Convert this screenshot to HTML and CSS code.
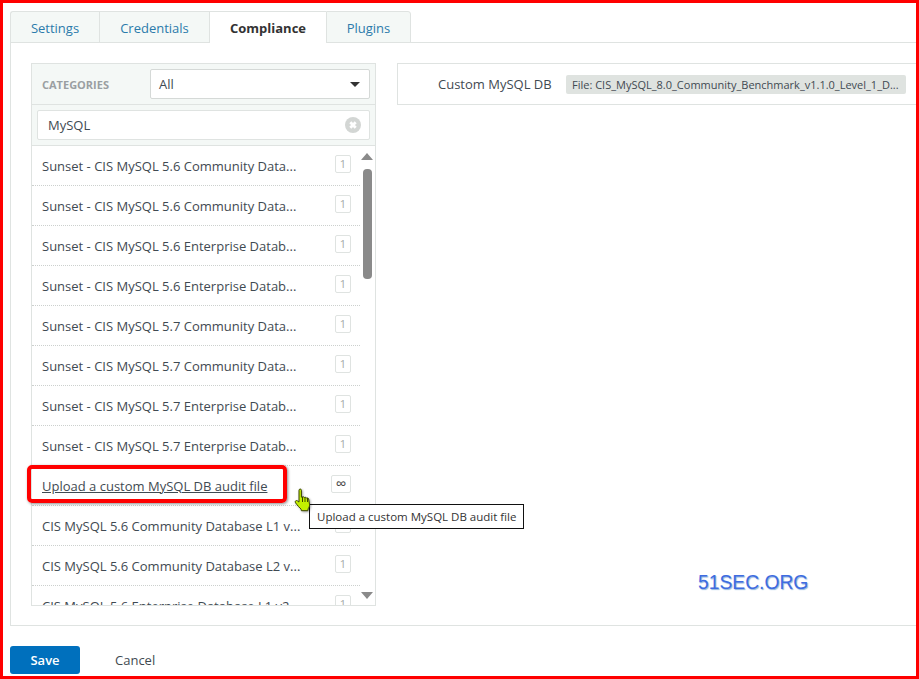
FILE: index.html
```html
<!DOCTYPE html>
<html lang="en">
<head>
<meta charset="utf-8">
<title>Compliance</title>
<link rel="stylesheet" href="styles.css">
</head>
<body>
<div class="frame">
  <div class="tabs">
    <div class="tab tab-settings">Settings</div>
    <div class="tab tab-cred">Credentials</div>
    <div class="tab tab-active">Compliance</div>
    <div class="tab tab-plugins">Plugins</div>
  </div>
  <div class="content">
    <div class="panel">
      <div class="cat-head">
        <span class="cat-label">CATEGORIES</span>
        <div class="select"><span>All</span><span class="caret"></span></div>
      </div>
      <div class="search-row">
        <div class="search"><span>MySQL</span>
          <svg class="clear" width="16" height="16" viewBox="0 0 16 16"><circle cx="8" cy="8" r="8" fill="#d3d6d4"/><path d="M5.300 5.300l5.400 5.400M10.700 5.300l-5.400 5.400" stroke="#fff" stroke-width="2.800"/></svg>
        </div>
      </div>
      <div class="list">
        <div class="row"><span class="name">Sunset - CIS MySQL 5.6 Community Data...</span><span class="badge">1</span></div>
        <div class="row"><span class="name">Sunset - CIS MySQL 5.6 Community Data...</span><span class="badge">1</span></div>
        <div class="row"><span class="name">Sunset - CIS MySQL 5.6 Enterprise Datab...</span><span class="badge">1</span></div>
        <div class="row"><span class="name">Sunset - CIS MySQL 5.6 Enterprise Datab...</span><span class="badge">1</span></div>
        <div class="row"><span class="name">Sunset - CIS MySQL 5.7 Community Data...</span><span class="badge">1</span></div>
        <div class="row"><span class="name">Sunset - CIS MySQL 5.7 Community Data...</span><span class="badge">1</span></div>
        <div class="row"><span class="name">Sunset - CIS MySQL 5.7 Enterprise Datab...</span><span class="badge">1</span></div>
        <div class="row"><span class="name">Sunset - CIS MySQL 5.7 Enterprise Datab...</span><span class="badge">1</span></div>
        <div class="row"><span class="name name-link">Upload a custom MySQL DB audit file</span><span class="badge badge-inf">∞</span></div>
        <div class="row"><span class="name">CIS MySQL 5.6 Community Database L1 v...</span><span class="badge">1</span></div>
        <div class="row"><span class="name">CIS MySQL 5.6 Community Database L2 v...</span><span class="badge">1</span></div>
        <div class="row"><span class="name">CIS MySQL 5.6 Enterprise Database L1 v2...</span><span class="badge">1</span></div>
        <div class="scrollbar">
          <span class="arrow-up"></span>
          <span class="thumb"></span>
          <span class="arrow-down"></span>
        </div>
      </div>
    </div>
    <div class="detail">
      <span class="detail-label">Custom MySQL DB</span>
      <span class="chip">File: CIS_MySQL_8.0_Community_Benchmark_v1.1.0_Level_1_D...</span>
    </div>
  </div>
  <div class="actions">
    <div class="save">Save</div>
    <div class="cancel">Cancel</div>
  </div>
  <div class="highlight"></div>
  <div class="tooltip">Upload a custom MySQL DB audit file</div>
  <svg class="cursor" width="18" height="24" viewBox="0 0 18 24">
    <path d="M5 2.200c0-1.600 2.400-1.600 2.400 0v7l1-.3c.9-.3 1.800 0 2 .6.9-.4 1.900-.1 2.100.6.9-.4 2 0 2.200.9l.8 5.500c.2 1.700-.5 3-1.300 4.200l-.4 2H7.400l-.3-1.500C5.500 19.700 3.600 17.600 1.500 14.800c-1-1.500.6-3 2-1.900l1.500 1.200z" fill="#c3f000" stroke="#3a4400" stroke-width="1"/>
    <path d="M8.500 9v5M11 9.500v4.500M13.500 10v4" stroke="#3a4400" stroke-width="1"/>
  </svg>
  <div class="watermark">51SEC.ORG</div>
</div>
</body>
</html>
```
FILE: styles.css
```css
* { box-sizing: border-box; }
html, body { margin: 0; padding: 0; background: #fff; }
body { font-family: "Open Sans", "Liberation Sans", sans-serif; font-size: 13px; color: #3f4a52; }
.frame { position: relative; width: 919px; height: 679px; border: 3px solid #f00; padding: 8px 0 0 7px; overflow: hidden; }

.tabs { display: flex; height: 32px; }
.tab { height: 32px; padding-top: 7px; text-align: center; color: #2b7bab; background: #f4f8f6; border: 1px solid #dfe3e1; border-right: 0; line-height: 18px; }
.tab-settings { width: 89px; border-radius: 3px 0 0 0; }
.tab-cred { width: 110px; }
.tab-active { width: 117px; background: #fff; border-bottom: 0; color: #333; font-weight: 700; position: relative; z-index: 1; }
.tab-plugins { width: 85px; border-right: 1px solid #dfe3e1; border-radius: 0 3px 0 0; }

.content { display: flex; height: 584px; margin-top: -1px; border: 1px solid #dfe3e1; border-right: 0; padding: 20px 0 0 20px; gap: 21px; align-items: flex-start; }

.panel { width: 345px; height: 543px; border: 1px solid #dfe3e1; flex: none; display: flex; flex-direction: column; }
.cat-head { height: 41px; flex: none; background: #f4f8f6; border-bottom: 1px solid #dfe3e1; display: flex; align-items: center; padding: 0 5px 0 10px; }
.cat-label { width: 108px; font-size: 11px; font-weight: 700; color: #9a9fa2; }
.select { width: 220px; height: 30px; background: #fff; border: 1px solid #d5d9d7; border-radius: 2px; display: flex; align-items: center; justify-content: space-between; padding: 0 9px 0 8px; }
.caret { width: 0; height: 0; border-left: 5px solid transparent; border-right: 5px solid transparent; border-top: 5px solid #333; }
.search-row { height: 41px; flex: none; background: #f4f8f6; border-bottom: 1px solid #dfe3e1; padding: 5px; }
.search { height: 30px; background: #fff; border: 1px solid #dfe3e1; border-radius: 2px; display: flex; align-items: center; justify-content: space-between; padding: 0 8px 0 10px; }

.list { position: relative; flex: 1; overflow: hidden; }
.row { height: 40px; width: 328px; display: flex; align-items: center; justify-content: space-between; padding: 0 9px 0 10px; border-bottom: 1px dotted #ccd0ce; }
.name { white-space: nowrap; }
.name-link { text-decoration: underline; }
.badge { width: 16px; height: 18px; margin-top: -4px; border: 1px solid #dfe3e1; border-radius: 2px; text-align: center; font-size: 11px; line-height: 15px; color: #a5aaa8; }
.badge-inf { width: 20px; margin-right: 0; color: #444; font-size: 15px; line-height: 15px; }

.scrollbar { position: absolute; top: 7px; right: 2px; width: 12px; height: 446px; display: flex; flex-direction: column; align-items: center; }
.arrow-up { width: 0; height: 0; border-left: 6px solid transparent; border-right: 6px solid transparent; border-bottom: 7px solid #8a8a8a; }
.thumb { width: 9px; height: 110px; margin-top: 9px; border-radius: 4px; background: #8a8a8a; }
.arrow-down { width: 0; height: 0; margin-top: auto; border-left: 6px solid transparent; border-right: 6px solid transparent; border-top: 7px solid #8a8a8a; }

.detail { flex: 1; height: 42px; border: 1px solid #dfe3e1; border-right: 0; display: flex; align-items: center; padding-left: 40px; }
.detail-label { width: 128px; }
.chip { width: 340px; height: 19px; background: #dfe3e0; border-radius: 2px; padding-left: 6px; font-size: 11px; line-height: 19px; white-space: nowrap; overflow: hidden; }

.actions { display: flex; align-items: center; margin-top: 20px; }
.save { width: 70px; height: 28px; background: #0070bd; border-radius: 3px; color: #fff; text-align: center; line-height: 28px; font-weight: 600; }
.cancel { margin-left: 35px; }

.highlight { position: absolute; left: 24px; top: 462px; width: 260px; height: 38px; border: 4px solid #f00; border-radius: 5px; box-shadow: 1px 1px 3px rgba(0,0,0,.45); }
.tooltip { position: absolute; left: 306px; top: 501px; width: 215px; height: 25px; background: #fff; border: 1px solid #111; font-size: 11.500px; line-height: 23px; padding-left: 7px; color: #333; white-space: nowrap; }
.cursor { position: absolute; left: 291px; top: 485px; filter: drop-shadow(1px 1px 1px rgba(0,0,0,.35)); }
.watermark { position: absolute; left: 695px; top: 568px; font-family: "Liberation Sans", Arial, sans-serif; font-size: 19.300px; line-height: 24px; color: #3f6ce0; text-shadow: 1px 1px 1px #8fb4dc; }
```
